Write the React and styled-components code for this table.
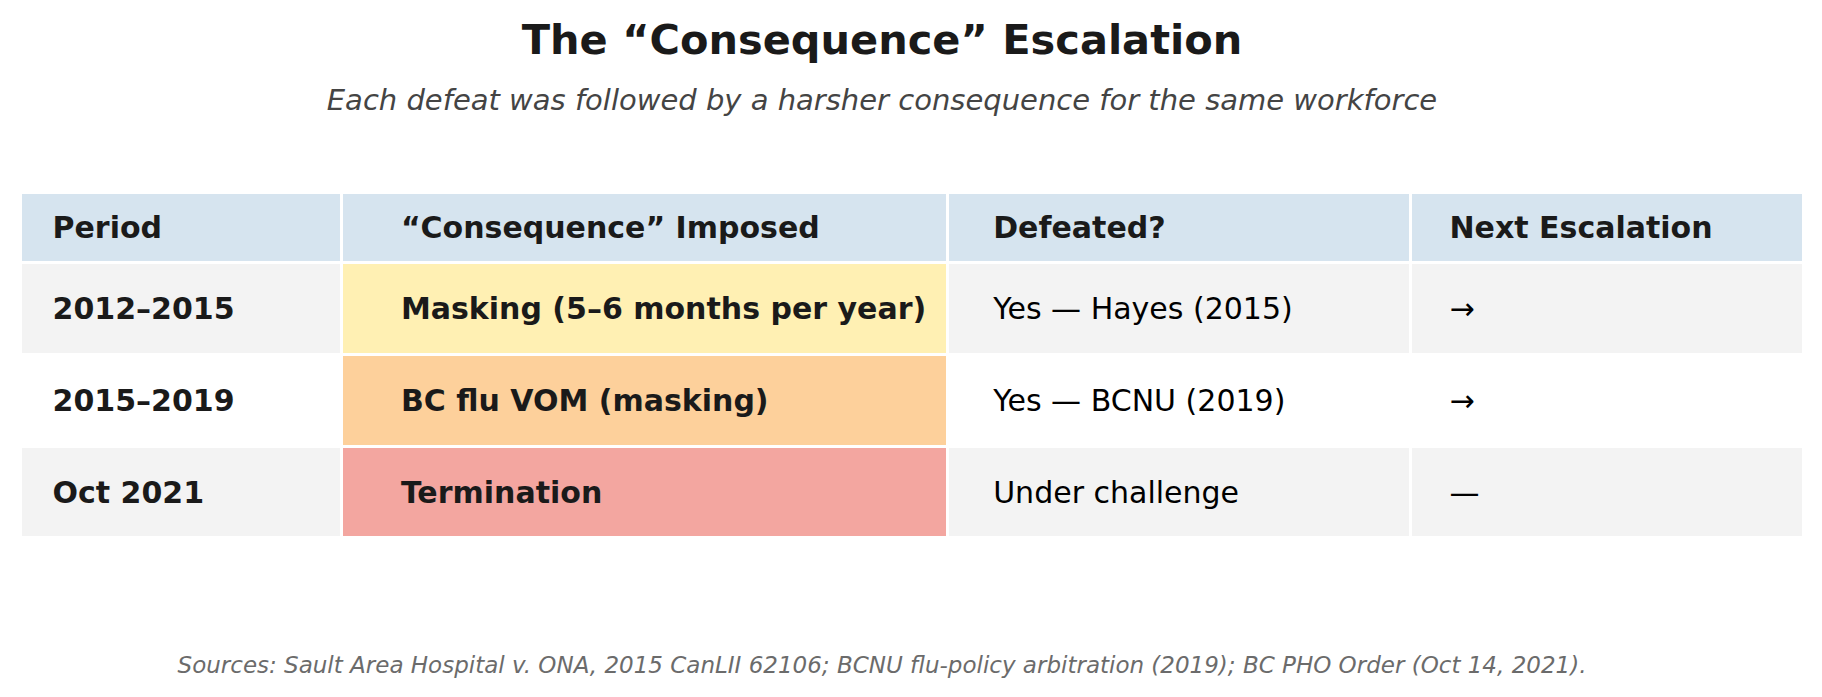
import styled, { createGlobalStyle } from "styled-components";

const GlobalStyle = createGlobalStyle`
  html, body {
    margin: 0;
    padding: 0;
    background: #ffffff;
  }
  body {
    font-family: "DejaVu Sans", "Liberation Sans", sans-serif;
    color: #1a1a1a;
  }
`;

const rows = [
  {
    period: "2012–2015",
    consequence: "Masking (5–6 months per year)",
    tone: "yellow",
    defeated: "Yes — Hayes (2015)",
    next: "→",
  },
  {
    period: "2015–2019",
    consequence: "BC flu VOM (masking)",
    tone: "orange",
    defeated: "Yes — BCNU (2019)",
    next: "→",
  },
  {
    period: "Oct 2021",
    consequence: "Termination",
    tone: "red",
    defeated: "Under challenge",
    next: "—",
  },
];

const tones = {
  yellow: "#fff0b3",
  orange: "#fdd09b",
  red: "#f3a6a0",
};

function App() {
  return (
    <Page>
      <GlobalStyle />
      <Heading>
        <Title>The “Consequence” Escalation</Title>
        <Subtitle>
          Each defeat was followed by a harsher consequence for the same workforce
        </Subtitle>
      </Heading>

      <Table>
        <HeadCell>Period</HeadCell>
        <HeadCell>“Consequence” Imposed</HeadCell>
        <HeadCell>Defeated?</HeadCell>
        <HeadCell>Next Escalation</HeadCell>

        {rows.map((row, i) => {
          const shaded = i % 2 === 0;
          return [
            <Cell key={`p${i}`} $shaded={shaded} $bold>
              {row.period}
            </Cell>,
            <Cell key={`c${i}`} $bg={tones[row.tone]} $bold>
              {row.consequence}
            </Cell>,
            <Cell key={`d${i}`} $shaded={shaded}>
              {row.defeated}
            </Cell>,
            <Cell key={`n${i}`} $shaded={shaded}>
              {row.next}
            </Cell>,
          ];
        })}
      </Table>

      <Footnote>
        Sources: Sault Area Hospital v. ONA, 2015 CanLII 62106; BCNU flu-policy
        arbitration (2019); BC PHO Order (Oct 14, 2021).
      </Footnote>
    </Page>
  );
}

export default App;

const Page = styled.div`
  width: 1822px;
  height: 697px;
  overflow: hidden;
  display: flex;
  flex-direction: column;
`;

const Heading = styled.div`
  display: flex;
  flex-direction: column;
  align-items: center;
  padding-right: 58px;
  padding-top: 15px;
`;

const Title = styled.h1`
  margin: 0;
  font-size: 41.5px;
  line-height: 50px;
  font-weight: 700;
  color: #1a1a1a;
  white-space: nowrap;
`;

const Subtitle = styled.div`
  margin-top: 18px;
  font-size: 29px;
  line-height: 34px;
  font-style: italic;
  color: #444444;
  white-space: nowrap;
`;

const Table = styled.div`
  margin: 77px 20px 0 22px;
  display: grid;
  grid-template-columns: 318px 603px 460px 390px;
  grid-template-rows: 67px 89px 89px 88px;
  gap: 3px;
  background: #ffffff;
`;

const HeadCell = styled.div`
  display: flex;
  align-items: center;
  padding-left: 9.6%;
  background: #d6e4ef;
  font-size: 30px;
  font-weight: 700;
  color: #1a1a1a;
  white-space: nowrap;
`;

const Cell = styled.div`
  display: flex;
  align-items: center;
  padding-left: 9.6%;
  background: ${(p) => p.$bg || (p.$shaded ? "#f3f3f3" : "#ffffff")};
  font-size: 30px;
  font-weight: ${(p) => (p.$bold ? 700 : 400)};
  color: ${(p) => (p.$bold ? "#1a1a1a" : "#000000")};
  white-space: nowrap;
`;

const Footnote = styled.div`
  margin-top: 115px;
  padding-right: 58px;
  text-align: center;
  font-size: 23px;
  line-height: 28px;
  font-style: italic;
  color: #6b6b6b;
  white-space: nowrap;
`;
